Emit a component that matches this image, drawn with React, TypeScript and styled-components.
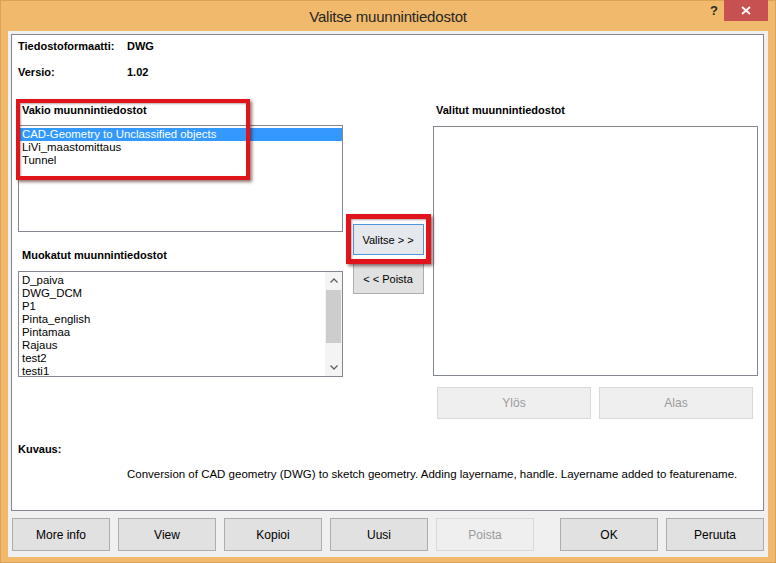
import React from "react";
import styled, { createGlobalStyle } from "styled-components";

const GlobalStyle = createGlobalStyle`
  html, body { margin: 0; padding: 0; width: 776px; height: 563px; overflow: hidden; }
  body { font-family: "Liberation Sans", Arial, sans-serif; color: #000; }
  #root { width: 776px; height: 563px; }
`;

const Window = styled.div`
  position: relative;
  width: 776px;
  height: 563px;
  box-sizing: border-box;
  background: #f1b96b;
  border: 1px solid #d9a257;
  display: flex;
  flex-direction: column;
`;

const TitleBar = styled.div`
  height: 30px;
  flex: none;
  display: grid;
  grid-template-columns: 1fr auto 1fr;
  align-items: center;
`;

const TitleText = styled.div`
  grid-column: 2;
  font-size: 15px;
  color: #262626;
  letter-spacing: -0.2px;
  padding-top: 1px;
`;

const Caption = styled.div`
  grid-column: 3;
  justify-self: end;
  align-self: start;
  display: flex;
  margin-right: 7px;
  margin-top: -1px;
`;

const HelpButton = styled.div`
  width: 20px;
  height: 21px;
  display: flex;
  align-items: center;
  justify-content: center;
  font-weight: bold;
  font-size: 13px;
  color: #2a2a2a;
`;

const CloseButton = styled.div`
  width: 44px;
  height: 21px;
  background: #c75050;
  display: flex;
  align-items: center;
  justify-content: center;
`;

const Client = styled.div`
  flex: 1;
  margin: 0 7px 5px 7px;
  background: #f0f0f0;
  display: flex;
  flex-direction: column;
  padding: 3px 4px 0 3px;
`;

const Panel = styled.div`
  height: 477px;
  box-sizing: border-box;
  background: #fff;
  border: 1px solid #828790;
  padding: 4px 5px 0 6px;
  font-size: 11px;
`;

const InfoGrid = styled.div`
  display: grid;
  grid-template-columns: 109px auto;
  row-gap: 12px;
  line-height: 14px;
  font-weight: bold;
`;

const Columns = styled.div`
  margin-top: 24px;
  display: grid;
  grid-template-columns: 325px 1fr 325px;
`;

const Column = styled.div`
  display: flex;
  flex-direction: column;
`;

const MiddleColumn = styled.div`
  display: flex;
  flex-direction: column;
  align-items: center;
  padding-top: 121px;
  gap: 8px;
`;

const Label = styled.div<{ $indent: number; $top?: number }>`
  font-weight: bold;
  line-height: 14px;
  padding-left: ${(p) => p.$indent}px;
  margin-top: ${(p) => p.$top ?? 0}px;
`;

const ListBox = styled.div<{ $height: number; $top: number }>`
  height: ${(p) => p.$height}px;
  margin-top: ${(p) => p.$top}px;
  box-sizing: border-box;
  border: 1px solid #828790;
  background: #fff;
  display: flex;
  overflow: hidden;
`;

const Items = styled.div`
  flex: 1;
  padding: 2px 0 0 1px;
  overflow: hidden;
  font-size: 11.4px;
`;

const Item = styled.div<{ $selected?: boolean }>`
  height: 13px;
  line-height: 13px;
  padding-left: 2px;
  white-space: nowrap;
  background: ${(p) => (p.$selected ? "#3399ff" : "transparent")};
  color: ${(p) => (p.$selected ? "#fff" : "#000")};
`;

const ScrollBar = styled.div`
  width: 17px;
  flex: none;
  background: #f4f4f4;
  display: flex;
  flex-direction: column;
`;

const ScrollArrow = styled.div`
  height: 17px;
  display: flex;
  align-items: center;
  justify-content: center;
`;

const ScrollTrack = styled.div`
  flex: 1;
  padding-top: 1px;
`;

const Thumb = styled.div`
  height: 53px;
  margin: 0 1px;
  background: #cdcdcd;
`;

const Button = styled.div<{
  $disabled?: boolean;
  $focused?: boolean;
  $w?: number;
  $h?: number;
  $fs?: number;
}>`
  box-sizing: border-box;
  flex: none;
  width: ${(p) => (p.$w ? `${p.$w}px` : "auto")};
  height: ${(p) => p.$h ?? 33}px;
  display: flex;
  align-items: center;
  justify-content: center;
  font-size: ${(p) => p.$fs ?? 12}px;
  background: ${(p) => (p.$disabled ? "#efefef" : p.$focused ? "#e5e8ec" : "#e1e1e1")};
  border: 1px solid ${(p) => (p.$disabled ? "#d9d9d9" : p.$focused ? "#4f95e0" : "#adadad")};
  color: ${(p) => (p.$disabled ? "#9a9a9a" : "#000")};
  white-space: nowrap;
`;

const SideButtons = styled.div`
  margin-top: 11px;
  padding: 0 5px 0 4px;
  display: grid;
  grid-template-columns: 1fr 1fr;
  gap: 8px;
`;

const DescLabel = styled.div`
  margin-top: 23px;
  font-weight: bold;
  line-height: 14px;
`;

const DescText = styled.div`
  margin-top: 11px;
  padding-left: 109px;
  line-height: 14px;
  font-size: 11.5px;
  white-space: nowrap;
`;

const ButtonBar = styled.div`
  display: flex;
  gap: 8px;
  padding: 7px 0 0 1px;
`;

const Spacer = styled.div`
  flex: none;
  width: 10px;
`;

const Annotation = styled.div<{ $x: number; $y: number; $w: number; $h: number; $b: number }>`
  position: absolute;
  left: ${(p) => p.$x}px;
  top: ${(p) => p.$y}px;
  width: ${(p) => p.$w}px;
  height: ${(p) => p.$h}px;
  box-sizing: border-box;
  border: ${(p) => p.$b}px solid #e0141b;
  box-shadow: 2px 2px 3px rgba(60, 0, 0, 0.55), inset 1px 1px 2px rgba(60, 0, 0, 0.35);
  pointer-events: none;
`;

const Chevron = ({ up }: { up?: boolean }) => (
  <svg width="8" height="5" viewBox="0 0 8 5">
    <polyline
      points={up ? "0.5,4.5 4,1 7.5,4.5" : "0.5,0.5 4,4 7.5,0.5"}
      fill="none"
      stroke="#606060"
      strokeWidth="1.3"
    />
  </svg>
);

const standard = ["CAD-Geometry to Unclassified objects", "LiVi_maastomittaus", "Tunnel"];
const custom = ["D_paiva", "DWG_DCM", "P1", "Pinta_english", "Pintamaa", "Rajaus", "test2", "testi1"];

export default function App() {
  return (
    <>
      <GlobalStyle />
      <Window>
        <TitleBar>
          <TitleText>Valitse muunnintiedostot</TitleText>
          <Caption>
            <HelpButton>?</HelpButton>
            <CloseButton>
              <svg width="10" height="9" viewBox="0 0 10 9">
                <line x1="1" y1="1" x2="9" y2="8" stroke="#fff" strokeWidth="1.8" />
                <line x1="9" y1="1" x2="1" y2="8" stroke="#fff" strokeWidth="1.8" />
              </svg>
            </CloseButton>
          </Caption>
        </TitleBar>
        <Client>
          <Panel>
            <InfoGrid>
              <span>Tiedostoformaatti:</span>
              <span>DWG</span>
              <span>Versio:</span>
              <span>1.02</span>
            </InfoGrid>
            <Columns>
              <Column>
                <Label $indent={4}>Vakio muunnintiedostot</Label>
                <ListBox $height={107} $top={8}>
                  <Items>
                    {standard.map((s, i) => (
                      <Item key={s} $selected={i === 0}>
                        {s}
                      </Item>
                    ))}
                  </Items>
                </ListBox>
                <Label $indent={4} $top={16}>
                  Muokatut muunnintiedostot
                </Label>
                <ListBox $height={106} $top={9}>
                  <Items>
                    {custom.map((s) => (
                      <Item key={s}>{s}</Item>
                    ))}
                  </Items>
                  <ScrollBar>
                    <ScrollArrow>
                      <Chevron up />
                    </ScrollArrow>
                    <ScrollTrack>
                      <Thumb />
                    </ScrollTrack>
                    <ScrollArrow>
                      <Chevron />
                    </ScrollArrow>
                  </ScrollBar>
                </ListBox>
              </Column>
              <MiddleColumn>
                <Button $w={71} $h={31} $fs={11} $focused>
                  Valitse &gt; &gt;
                </Button>
                <Button $w={71} $h={31} $fs={11}>
                  &lt; &lt; Poista
                </Button>
              </MiddleColumn>
              <Column>
                <Label $indent={3}>Valitut muunnintiedostot</Label>
                <ListBox $height={250} $top={9} />
                <SideButtons>
                  <Button $h={32} $disabled>
                    Ylös
                  </Button>
                  <Button $h={32} $disabled>
                    Alas
                  </Button>
                </SideButtons>
              </Column>
            </Columns>
            <DescLabel>Kuvaus:</DescLabel>
            <DescText>
              Conversion of CAD geometry (DWG) to sketch geometry. Adding layername, handle. Layername added to featurename.
            </DescText>
          </Panel>
          <ButtonBar>
            <Button $w={98}>More info</Button>
            <Button $w={98}>View</Button>
            <Button $w={98}>Kopioi</Button>
            <Button $w={98}>Uusi</Button>
            <Button $w={98} $disabled>
              Poista
            </Button>
            <Spacer />
            <Button $w={98}>OK</Button>
            <Button $w={98}>Peruuta</Button>
          </ButtonBar>
        </Client>
        <Annotation $x={15} $y={98} $w={234} $h={81} $b={4} />
        <Annotation $x={345} $y={213} $w={85} $h={50} $b={5} />
      </Window>
    </>
  );
}
